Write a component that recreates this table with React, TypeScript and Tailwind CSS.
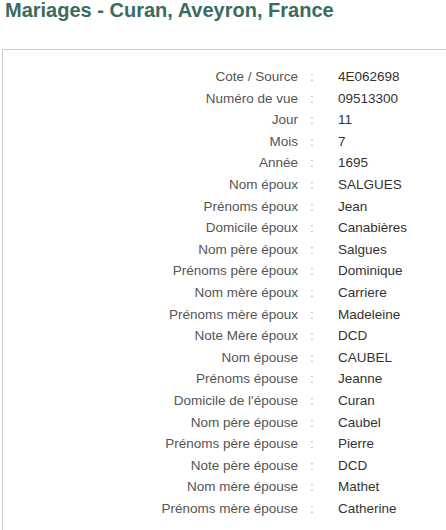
const rows: [string, string][] = [
  ['Cote / Source', '4E062698'],
  ['Numéro de vue', '09513300'],
  ['Jour', '11'],
  ['Mois', '7'],
  ['Année', '1695'],
  ['Nom époux', 'SALGUES'],
  ['Prénoms époux', 'Jean'],
  ['Domicile époux', 'Canabières'],
  ['Nom père époux', 'Salgues'],
  ['Prénoms père époux', 'Dominique'],
  ['Nom mère époux', 'Carriere'],
  ['Prénoms mère époux', 'Madeleine'],
  ['Note Mère époux', 'DCD'],
  ['Nom épouse', 'CAUBEL'],
  ['Prénoms épouse', 'Jeanne'],
  ["Domicile de l'épouse", 'Curan'],
  ['Nom père épouse', 'Caubel'],
  ['Prénoms père épouse', 'Pierre'],
  ['Note père épouse', 'DCD'],
  ['Nom mère épouse', 'Mathet'],
  ['Prénoms mère épouse', 'Catherine'],
];

export default function App() {
  return (
    <div className="w-[446px] h-[530px] overflow-hidden bg-white font-['Liberation_Sans',Arial,sans-serif]">
      <h1 className="pl-[5px] text-[20px] leading-[18px] pt-px font-bold text-[#3b6b5f]">
        Mariages - Curan, Aveyron, France
      </h1>
      <div className="mt-[30px] ml-[2px] w-[460px] border border-[#cccccc] pt-[16px] pb-4">
        <table className="text-[13.5px] leading-[21.6px]">
          <tbody>
            {rows.map(([label, value]) => (
              <tr key={label}>
                <td className="w-[295px] text-right text-[#555555]">{label}</td>
                <td className="w-[40px] pl-[12px] text-left text-[#b0b0b0]">:</td>
                <td className="text-[#333333]">{value}</td>
              </tr>
            ))}
          </tbody>
        </table>
      </div>
    </div>
  );
}
